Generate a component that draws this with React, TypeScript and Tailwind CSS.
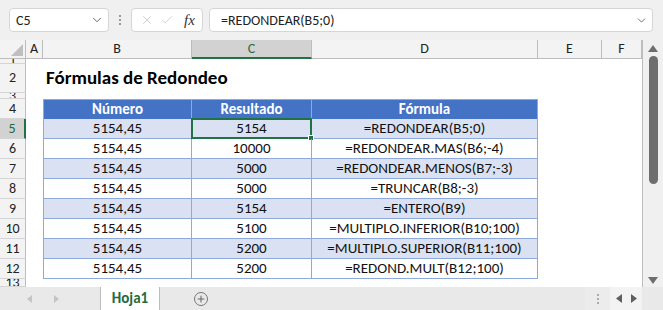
import { ChevronDown, X, Check, Plus } from "lucide-react";

const font = { fontFamily: "Carlito, Calibri, 'Liberation Sans', Arial, sans-serif" };

// column widths: row header, A, B, C, D, E, F
const cols = [
  { key: "A", w: "w-[17px]" },
  { key: "B", w: "w-[149px]" },
  { key: "C", w: "w-[120px]" },
  { key: "D", w: "w-[226px]" },
  { key: "E", w: "w-[64px]" },
  { key: "F", w: "w-[40px]" },
];

const data = [
  ["5154,45", "5154", "=REDONDEAR(B5;0)"],
  ["5154,45", "10000", "=REDONDEAR.MAS(B6;-4)"],
  ["5154,45", "5000", "=REDONDEAR.MENOS(B7;-3)"],
  ["5154,45", "5000", "=TRUNCAR(B8;-3)"],
  ["5154,45", "5154", "=ENTERO(B9)"],
  ["5154,45", "5100", "=MULTIPLO.INFERIOR(B10;100)"],
  ["5154,45", "5200", "=MULTIPLO.SUPERIOR(B11;100)"],
  ["5154,45", "5200", "=REDOND.MULT(B12;100)"],
];

function RowHead({ n, h, active }: { n: string; h: string; active?: boolean }) {
  return (
    <div
      className={`w-[26px] ${h} shrink-0 flex items-center justify-center overflow-hidden border-b border-[#d4d4d4] text-[14px] leading-none ${
        active
          ? "bg-[#d2d2d2] text-[#1e6b41] border-r-2 border-r-[#217346]"
          : "bg-[#f3f3f3] text-[#222] border-r border-r-[#bdbdbd]"
      }`}
    >
      {n}
    </div>
  );
}

function TopBar() {
  return (
    <div className="h-[40px] bg-[#f0f0f0] flex items-center pl-[9px] pr-[10px]">
      <div className="w-[100px] h-[24px] bg-white border border-[#d6d6d6] rounded-[4px] flex items-center justify-between pl-[6px] pr-[4px] text-[14px] text-[#222]">
        <span>C5</span>
        <ChevronDown className="w-[14px] h-[14px] text-[#555]" strokeWidth={1.5} />
      </div>
      <div className="w-[22px] flex flex-col items-center gap-[2px]">
        <span className="w-[2px] h-[2px] bg-[#999]" />
        <span className="w-[2px] h-[2px] bg-[#999]" />
        <span className="w-[2px] h-[2px] bg-[#999]" />
      </div>
      <div className="w-[72px] h-[24px] bg-white border border-[#d6d6d6] rounded-[4px] flex items-center pl-[8px] gap-[6px]">
        <X className="w-[14px] h-[14px] text-[#c8c8c8]" strokeWidth={1.5} />
        <Check className="w-[14px] h-[14px] text-[#c8c8c8]" strokeWidth={1.5} />
        <span className="ml-[4px] text-[15px] italic text-[#333]" style={{ fontFamily: "'Liberation Serif', serif" }}>
          fx
        </span>
      </div>
      <div className="ml-[6px] flex-1 h-[24px] bg-white border border-[#d6d6d6] rounded-[4px] flex items-center justify-between pl-[11px] pr-[4px] text-[14px] text-[#222]">
        <span>=REDONDEAR(B5;0)</span>
        <ChevronDown className="w-[13px] h-[13px] text-[#555]" strokeWidth={1.5} />
      </div>
    </div>
  );
}

function ColHeader() {
  return (
    <div className="flex h-[19px]">
      <div className="w-[26px] shrink-0 bg-[#f3f3f3] border-r border-b border-[#bdbdbd] relative">
        <svg className="absolute right-[2px] bottom-[2px]" width="12" height="12" viewBox="0 0 12 12">
          <polygon points="12,0 12,12 0,12" fill="#bfbfbf" />
        </svg>
      </div>
      {cols.map((c) => (
        <div
          key={c.key}
          className={`${c.w} shrink-0 flex items-center justify-center text-[14px] leading-none ${
            c.key === "C"
              ? "bg-[#d2d2d2] text-[#1e6b41] border-b-2 border-[#217346] border-r border-r-[#bdbdbd]"
              : "bg-[#f3f3f3] text-[#222] border-b border-r border-[#bdbdbd]"
          }`}
        >
          {c.key}
        </div>
      ))}
    </div>
  );
}

function EmptyRow({ n, h }: { n: string; h: string }) {
  return (
    <div className={`flex ${h}`}>
      <RowHead n={n} h={h} />
      <div className="flex-1 bg-white" />
    </div>
  );
}

function Sheet() {
  return (
    <div className="flex-1 flex flex-col bg-white">
      <EmptyRow n="1" h="h-[5px]" />
      <div className="flex h-[29px]">
        <RowHead n="2" h="h-[29px]" />
        <div className="w-[17px]" />
        <div className="flex items-center pl-[3px] text-[19px] font-bold text-black">Fórmulas de Redondeo</div>
      </div>
      <EmptyRow n="3" h="h-[6px]" />
      <div className="flex h-[20px]">
        <RowHead n="4" h="h-[20px]" />
        <div className="w-[17px]" />
        <div className="flex bg-[#4472c4] text-white font-bold text-[15px] border-t border-[#8ea9db]">
          <div className="w-[149px] flex items-center justify-center border-l border-r border-[#8ea9db]">Número</div>
          <div className="w-[120px] flex items-center justify-center border-r border-[#8ea9db]">Resultado</div>
          <div className="w-[226px] flex items-center justify-center border-r border-[#8ea9db]">Fórmula</div>
        </div>
      </div>
      {data.map((r, i) => {
        const band = i % 2 === 0 ? "bg-[#d9e1f2]" : "bg-white";
        const sel = i === 0;
        return (
          <div key={i} className="flex h-[20px]">
            <RowHead n={String(i + 5)} h="h-[20px]" active={sel} />
            <div className="w-[17px]" />
            <div className={`flex ${band} text-[15px] text-[#111]`}>
              <div className="w-[149px] flex items-center justify-center border-l border-r border-b border-[#8ea9db]">{r[0]}</div>
              <div className="w-[120px] flex items-center justify-center border-r border-b border-[#8ea9db] relative">
                {r[1]}
                {sel && (
                  <>
                    <div className="absolute left-[-1px] top-[-1px] right-[-1px] bottom-[-1px] border-2 border-[#217346]" />
                    <div className="absolute right-[-3px] bottom-[-3px] w-[6px] h-[6px] bg-[#217346] border border-white" />
                  </>
                )}
              </div>
              <div className="w-[226px] flex items-center justify-center border-r border-b border-[#8ea9db]">{r[2]}</div>
            </div>
          </div>
        );
      })}
      <EmptyRow n="13" h="h-[8px]" />
    </div>
  );
}

function VScroll() {
  return (
    <div className="w-[21px] bg-[#f0f0f0] border-l border-[#bdbdbd] flex flex-col items-center pt-[5px] pb-[3px]">
      <svg width="10" height="7" viewBox="0 0 10 7">
        <polygon points="5,0 10,7 0,7" fill="#6e6e6e" />
      </svg>
      <div className="mt-[4px] w-[9px] h-[128px] bg-[#6e6e6e] rounded-[5px]" />
      <div className="flex-1" />
      <svg width="10" height="7" viewBox="0 0 10 7">
        <polygon points="0,0 10,0 5,7" fill="#6e6e6e" />
      </svg>
    </div>
  );
}

function TabBar() {
  return (
    <div className="h-[23px] bg-[#e9e9e9] flex items-stretch">
      <div className="w-[100px] flex items-center pl-[27px] gap-[22px]">
        <svg width="5" height="8" viewBox="0 0 5 8">
          <polygon points="5,0 5,8 0,4" fill="#c4c4c4" />
        </svg>
        <svg width="5" height="8" viewBox="0 0 5 8">
          <polygon points="0,0 0,8 5,4" fill="#c4c4c4" />
        </svg>
      </div>
      <div className="w-[60px] bg-white border-l border-r border-[#bdbdbd] flex items-center justify-center text-[15px] font-bold text-[#1e6b41] pb-[1px]">
        Hoja1
      </div>
      <div className="w-[82px] flex items-center justify-center">
        <div className="w-[14px] h-[14px] rounded-full border border-[#777] flex items-center justify-center">
          <Plus className="w-[10px] h-[10px] text-[#666]" strokeWidth={2.5} />
        </div>
      </div>
      <div className="flex-1" />
      <div className="w-[25px] flex flex-col items-center justify-center gap-[2px] bg-[#ececec]">
        <span className="w-[2px] h-[2px] bg-[#aaa]" />
        <span className="w-[2px] h-[2px] bg-[#aaa]" />
        <span className="w-[2px] h-[2px] bg-[#aaa]" />
      </div>
      <div className="w-[32px] bg-[#f3f3f3] flex items-center justify-center gap-[9px]">
        <svg width="6" height="9" viewBox="0 0 6 9">
          <polygon points="6,0 6,9 0,4.5" fill="#5f5f5f" />
        </svg>
        <svg width="6" height="9" viewBox="0 0 6 9">
          <polygon points="0,0 0,9 6,4.5" fill="#5f5f5f" />
        </svg>
      </div>
      <div className="w-[21px]" />
    </div>
  );
}

export default function App() {
  return (
    <div className="w-[663px] h-[310px] overflow-hidden bg-[#f0f0f0] flex flex-col" style={font}>
      <TopBar />
      <div className="flex h-[247px]">
        <div className="w-[642px] flex flex-col">
          <ColHeader />
          <Sheet />
        </div>
        <VScroll />
      </div>
      <TabBar />
    </div>
  );
}
